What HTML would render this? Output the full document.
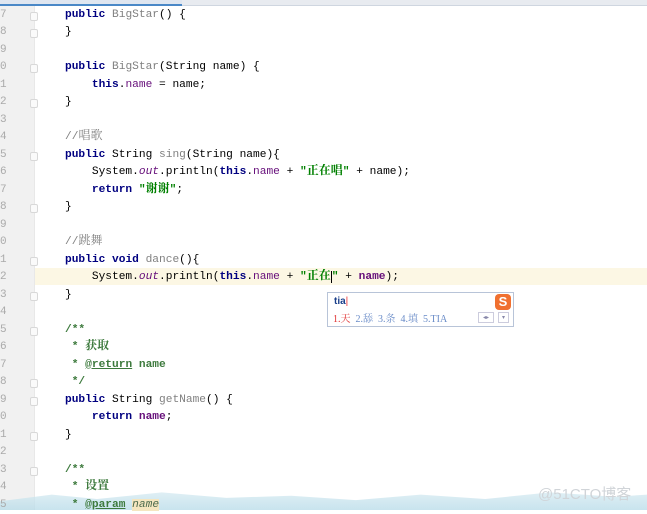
<!DOCTYPE html>
<html><head><meta charset="utf-8"><style>
body{margin:0;width:647px;height:510px;overflow:hidden;background:#fff;position:relative;font-family:"Liberation Mono","Noto Sans CJK SC",monospace;font-size:11.2px;}
.tab{position:absolute;left:0;top:0;width:647px;height:5px;background:#e8ebf0;border-bottom:1px solid #cfd6e0}
.tab i{position:absolute;left:0;top:0;width:182px;height:4px;background:#dfe6f0;border-bottom:2px solid #4a88c7}
.gut{position:absolute;left:0;top:6px;width:34px;height:504px;background:#f1f1f1;border-right:1px solid #e8e8e8}
.cur{position:absolute;left:35px;top:267.5px;width:612px;height:17.5px;background:#fcf7e4}
.code{position:absolute;left:0;top:6.5px;width:647px}
.l{height:17.5px;line-height:17.5px;white-space:pre;position:relative;color:#000;overflow:hidden}
.n{position:absolute;left:0;width:8px;color:#aaa;font-size:11px}
.t{position:absolute;left:65px}
.k{color:#000080;font-weight:bold}
.g{color:#808080}
.c{color:#808080}
.f{color:#660e7a}
.o{color:#660e7a;font-style:italic}
.s{color:#008000;font-weight:bold}
.dk{color:#3d7a3d;font-weight:bold;text-decoration:underline}
.cj{font-family:"Noto Serif CJK SC","Noto Sans CJK SC",serif;font-size:12px;line-height:10px}
.fold{position:absolute;left:30px;width:6px;height:7px;border:1px solid #d8d8d8;border-radius:2px;background:#fafafa;margin-top:5px}
.ime{position:absolute;left:327px;top:292px;width:185px;height:33px;border:1px solid #b8c4d8;background:#fff;font-size:10px}
.wm{position:absolute;left:0;top:488px;width:647px;height:22px;background:linear-gradient(#dcedf3,#b6dbe8);clip-path:polygon(0 60%,8% 30%,15% 50%,25% 20%,35% 45%,45% 35%,55% 55%,65% 30%,75% 50%,85% 20%,95% 40%,100% 30%,100% 100%,0 100%);opacity:.75}
</style></head><body>
<div class="tab"><i></i></div>
<div class="gut"></div>
<div class="cur"></div>
<div class="wm"></div>
<div class="code">
<div class="l"><span class="n">7</span><span class="fold"></span><span class="t"><span class="k">public</span> <span class="g">BigStar</span>() {</span></div>
<div class="l"><span class="n">8</span><span class="fold"></span><span class="t">}</span></div>
<div class="l"><span class="n">9</span></div>
<div class="l"><span class="n">0</span><span class="fold"></span><span class="t"><span class="k">public</span> <span class="g">BigStar</span>(String name) {</span></div>
<div class="l"><span class="n">1</span><span class="t">    <span class="k">this</span>.<span class="f">name</span> = name;</span></div>
<div class="l"><span class="n">2</span><span class="fold"></span><span class="t">}</span></div>
<div class="l"><span class="n">3</span></div>
<div class="l"><span class="n">4</span><span class="t"><span class="c">//<span class="cj">唱歌</span></span></span></div>
<div class="l"><span class="n">5</span><span class="fold"></span><span class="t"><span class="k">public</span> String <span class="g">sing</span>(String name){</span></div>
<div class="l"><span class="n">6</span><span class="t">    System.<span class="o">out</span>.println(<span class="k">this</span>.<span class="f">name</span> + <span class="s">"<span class="cj">正在唱</span>"</span> + name);</span></div>
<div class="l"><span class="n">7</span><span class="t">    <span class="k">return</span> <span class="s">"<span class="cj">谢谢</span>"</span>;</span></div>
<div class="l"><span class="n">8</span><span class="fold"></span><span class="t">}</span></div>
<div class="l"><span class="n">9</span></div>
<div class="l"><span class="n">0</span><span class="t"><span class="c">//<span class="cj">跳舞</span></span></span></div>
<div class="l"><span class="n">1</span><span class="fold"></span><span class="t"><span class="k">public</span> <span class="k">void</span> <span class="g">dance</span>(){</span></div>
<div class="l"><span class="n">2</span><span class="t">    System.<span class="o">out</span>.println(<span class="k">this</span>.<span class="f">name</span> + <span class="s">"<span class="cj">正在</span><span style="border-left:1px solid #000"></span>"</span> + <span class="f" style="font-weight:bold">name</span>);</span></div>
<div class="l"><span class="n">3</span><span class="fold"></span><span class="t">}</span></div>
<div class="l"><span class="n">4</span></div>
<div class="l"><span class="n">5</span><span class="fold"></span><span class="t" style="color:#3d7a3d;font-weight:bold">/**</span></div>
<div class="l"><span class="n">6</span><span class="t" style="color:#3d7a3d;font-weight:bold"> * <span class="cj">获取</span></span></div>
<div class="l"><span class="n">7</span><span class="t" style="color:#3d7a3d;font-weight:bold"> * <span class="dk">@return</span> name</span></div>
<div class="l"><span class="n">8</span><span class="fold"></span><span class="t" style="color:#3d7a3d;font-weight:bold"> */</span></div>
<div class="l"><span class="n">9</span><span class="fold"></span><span class="t"><span class="k">public</span> String <span class="g">getName</span>() {</span></div>
<div class="l"><span class="n">0</span><span class="t">    <span class="k">return</span> <span class="f" style="font-weight:bold">name</span>;</span></div>
<div class="l"><span class="n">1</span><span class="fold"></span><span class="t">}</span></div>
<div class="l"><span class="n">2</span></div>
<div class="l"><span class="n">3</span><span class="fold"></span><span class="t" style="color:#3d7a3d;font-weight:bold">/**</span></div>
<div class="l"><span class="n">4</span><span class="t" style="color:#3d7a3d;font-weight:bold"> * <span class="cj">设置</span></span></div>
<div class="l"><span class="n">5</span><span class="t" style="color:#3d7a3d;font-weight:bold"> * <span class="dk">@param</span> <span style="background:#f5e6c0;color:#4d6b4d;font-style:italic;font-weight:normal">name</span></span></div>
</div>
<div class="ime">
<div style="position:absolute;left:6px;top:3px;color:#1a3f8a;font-weight:bold;font-family:'Liberation Sans',sans-serif">tia<span style="color:#e33;font-weight:normal">|</span></div>
<div style="position:absolute;right:2px;top:1px;width:16px;height:16px;background:#f07030;border-radius:4px;color:#fff;font-weight:bold;font-size:13px;text-align:center;line-height:16px;font-family:'Liberation Sans',sans-serif">S</div>
<div style="position:absolute;left:5px;top:17px;white-space:pre;color:#6a8cc8;font-family:'Liberation Serif','Noto Serif CJK SC',serif;font-size:10px"><span style="color:#e03030">1.天</span>  2.舔  3.条  4.填  5.TIA</div>
<div style="position:absolute;left:150px;top:19px;width:14px;height:9px;border:1px solid #ccd;font-size:6px;color:#88a;line-height:9px;text-align:center">◂▸</div>
<div style="position:absolute;left:170px;top:19px;width:9px;height:9px;border:1px solid #ccd;font-size:6px;color:#88a;line-height:9px;text-align:center">▾</div>
</div>
<div style="position:absolute;left:538px;top:483px;color:#d0d4d8;font-family:'Liberation Sans','Noto Sans CJK SC',sans-serif;font-size:15px">@51CTO博客</div>
</body></html>
